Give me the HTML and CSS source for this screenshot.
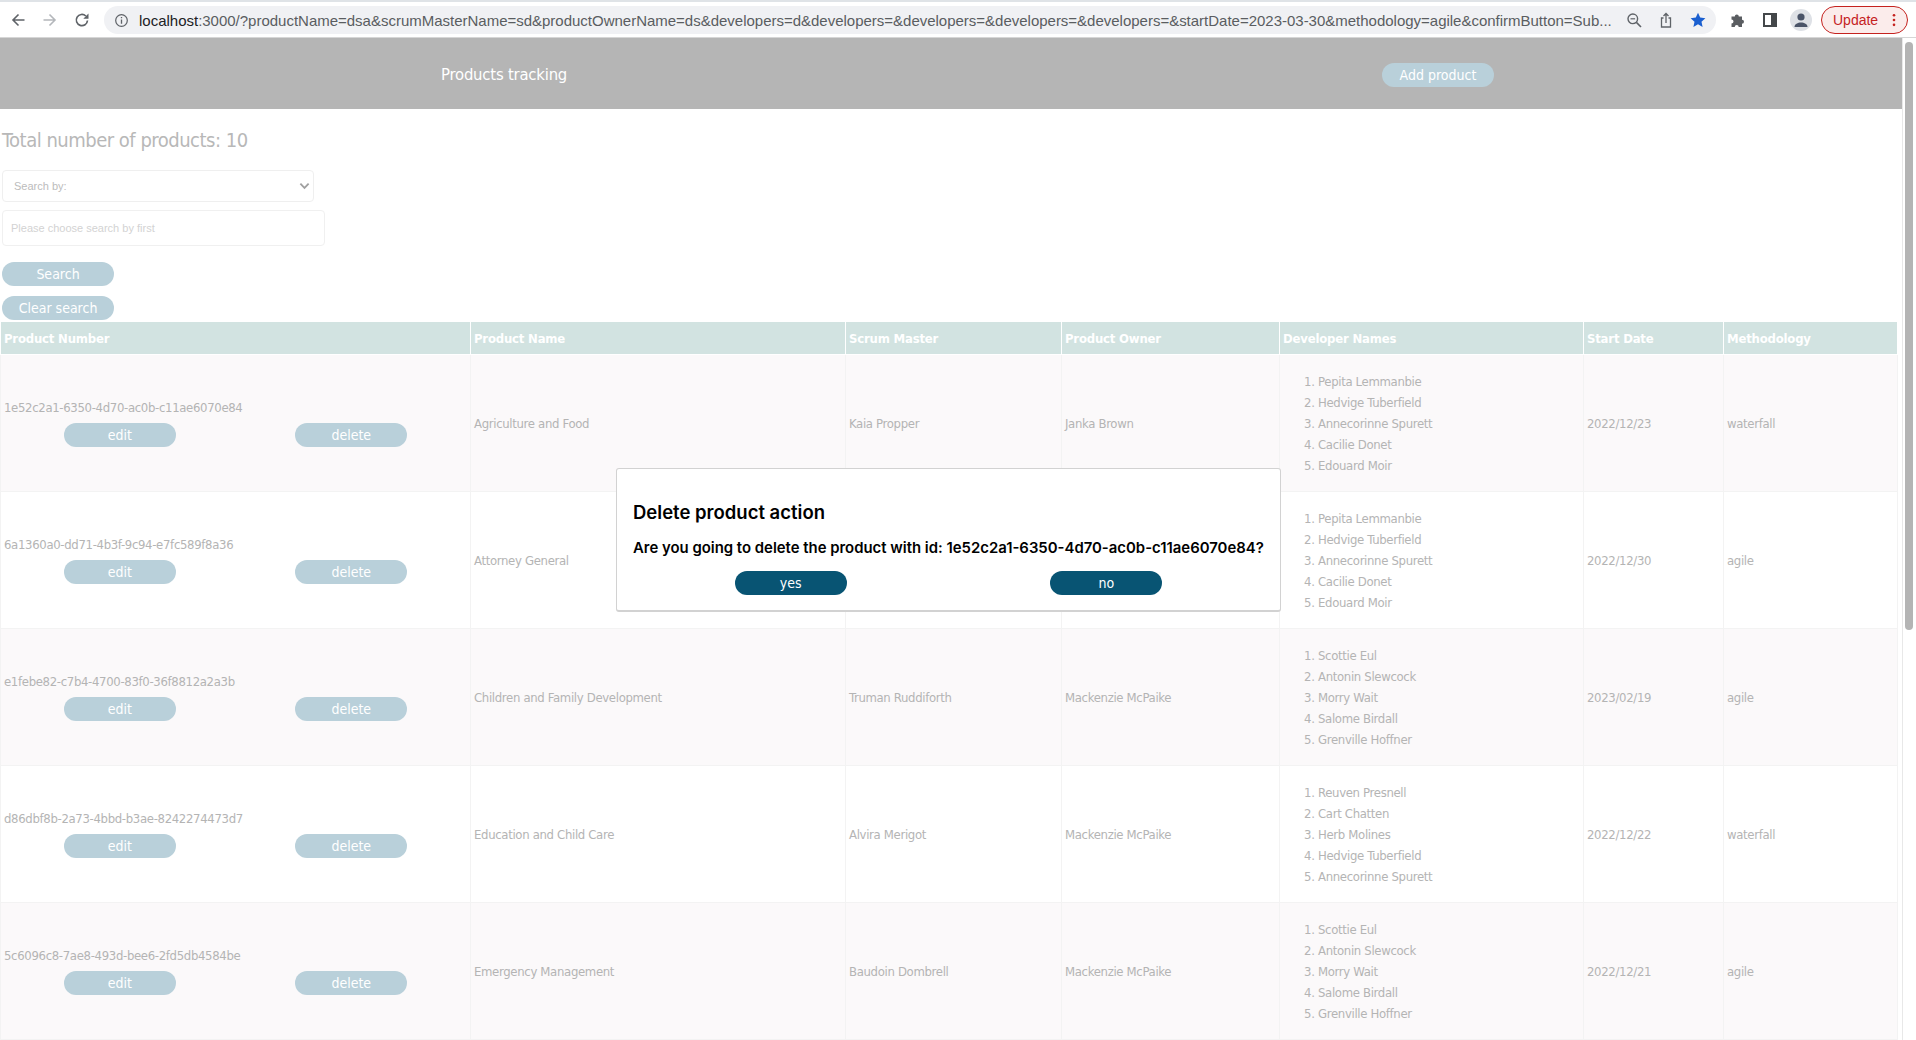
FILE: index.html
```html
<!DOCTYPE html>
<html lang="en">
<head>
<meta charset="utf-8">
<title>Products tracking</title>
<link rel="stylesheet" href="styles.css">
</head>
<body>
<div class="browser-bar">
  <svg class="ic" viewBox="0 0 16 16"><path d="M14.500 8H3M8.500 2.500 3 8l5.500 5.500" fill="none" stroke="#5f6368" stroke-width="1.6"/></svg>
  <svg class="ic" viewBox="0 0 16 16"><path d="M1.500 8H13M7.500 2.500 13 8l-5.500 5.500" fill="none" stroke="#b4b7bb" stroke-width="1.6"/></svg>
  <svg class="ic" viewBox="0 0 16 16"><path d="M13.500 8.500A5.600 5.600 0 1 1 11.800 4" fill="none" stroke="#5f6368" stroke-width="1.7"/><path d="M14.500 1.500v5.200H9.300z" fill="#5f6368"/></svg>
  <div class="omnibox">
    <svg class="info" viewBox="0 0 16 16"><circle cx="8" cy="8" r="6.200" fill="none" stroke="#5f6368" stroke-width="1.300"/><path d="M8 7v4.500M8 4.200v1.500" stroke="#5f6368" stroke-width="1.400"/></svg>
    <div class="url"><b>localhost</b>:3000/?productName=dsa&amp;scrumMasterName=sd&amp;productOwnerName=ds&amp;developers=d&amp;developers=&amp;developers=&amp;developers=&amp;developers=&amp;startDate=2023-03-30&amp;methodology=agile&amp;confirmButton=Sub...</div>
    <svg class="omni-ic" viewBox="0 0 16 16"><circle cx="6.800" cy="6.800" r="4.800" fill="none" stroke="#5f6368" stroke-width="1.400"/><path d="M10.400 10.400 15 15" stroke="#5f6368" stroke-width="1.600"/><path d="M4.500 6.800h4.600" stroke="#5f6368" stroke-width="1.200"/></svg>
    <svg class="omni-ic" viewBox="0 0 16 16"><path d="M5.500 6H3.500v9h9V6h-2M8 11V1.500M5.500 4 8 1.500 10.500 4" fill="none" stroke="#5f6368" stroke-width="1.300"/></svg>
    <svg class="omni-ic" viewBox="0 0 16 16"><path d="m8 .8 2.200 4.800 5.200.6-3.900 3.500 1.100 5.200L8 12.300l-4.600 2.600 1.100-5.200L.6 6.200l5.200-.6z" fill="#1a5fd0"/></svg>
  </div>
  <svg class="ext" viewBox="0 0 16 16"><path d="M1.500 4.500h3.300a2 2 0 1 1 4 0h3.200v3.200a2 2 0 1 1 0 4V15H8.700a2 2 0 1 0-4 0H1.500v-3.500a2 2 0 1 0 0-4z" fill="#5a5d61"/></svg>
  <svg class="ext" viewBox="0 0 16 16"><path d="M2 2h12v12H2z" fill="#fff" stroke="#44474a" stroke-width="2"/><path d="M9 2h5v12H9z" fill="#44474a"/></svg>
  <div class="avatar"><svg viewBox="0 0 22 22"><circle cx="11" cy="8" r="3.600" fill="#4a5468"/><path d="M4.500 18c0-6 13-6 13 0z" fill="#4a5468"/></svg></div>
  <div class="update"><span>Update</span><svg class="dots" viewBox="0 0 4 16"><circle cx="2" cy="2.500" r="1.500"/><circle cx="2" cy="8" r="1.500"/><circle cx="2" cy="13.500" r="1.500"/></svg></div>
</div>

<div class="viewport">
  <div class="page">
    <header class="top">
      <div class="brand">Products tracking</div>
      <button class="pill add">Add product</button>
    </header>
    <h2 class="total">Total number of products: 10</h2>
    <div class="fake-select"><span>Search by:</span><svg viewBox="0 0 12 8"><path d="M1.500 1.500 6 6l4.500-4.500" fill="none" stroke="#a0a0a0" stroke-width="2"/></svg></div>
    <div class="fake-input">Please choose search by first</div>
    <button class="pill search">Search</button>
    <button class="pill clear">Clear search</button>
    <table class="products">
      <colgroup><col class="c1"><col class="c2"><col class="c3"><col class="c4"><col class="c5"><col class="c6"><col class="c7"></colgroup>
      <thead>
        <tr><th>Product Number</th><th>Product Name</th><th>Scrum Master</th><th>Product Owner</th><th>Developer Names</th><th>Start Date</th><th>Methodology</th></tr>
      </thead>
      <tbody>
        <tr>
          <td>1e52c2a1-6350-4d70-ac0b-c11ae6070e84<div class="actions"><button class="pill">edit</button><button class="pill">delete</button></div></td>
          <td>Agriculture and Food</td><td>Kaia Propper</td><td>Janka Brown</td>
          <td><ol><li>Pepita Lemmanbie</li><li>Hedvige Tuberfield</li><li>Annecorinne Spurett</li><li>Cacilie Donet</li><li>Edouard Moir</li></ol></td>
          <td>2022/12/23</td><td>waterfall</td>
        </tr>
        <tr>
          <td>6a1360a0-dd71-4b3f-9c94-e7fc589f8a36<div class="actions"><button class="pill">edit</button><button class="pill">delete</button></div></td>
          <td>Attorney General</td><td></td><td></td>
          <td><ol><li>Pepita Lemmanbie</li><li>Hedvige Tuberfield</li><li>Annecorinne Spurett</li><li>Cacilie Donet</li><li>Edouard Moir</li></ol></td>
          <td>2022/12/30</td><td>agile</td>
        </tr>
        <tr>
          <td>e1febe82-c7b4-4700-83f0-36f8812a2a3b<div class="actions"><button class="pill">edit</button><button class="pill">delete</button></div></td>
          <td>Children and Family Development</td><td>Truman Ruddiforth</td><td>Mackenzie McPaike</td>
          <td><ol><li>Scottie Eul</li><li>Antonin Slewcock</li><li>Morry Wait</li><li>Salome Birdall</li><li>Grenville Hoffner</li></ol></td>
          <td>2023/02/19</td><td>agile</td>
        </tr>
        <tr>
          <td>d86dbf8b-2a73-4bbd-b3ae-8242274473d7<div class="actions"><button class="pill">edit</button><button class="pill">delete</button></div></td>
          <td>Education and Child Care</td><td>Alvira Merigot</td><td>Mackenzie McPaike</td>
          <td><ol><li>Reuven Presnell</li><li>Cart Chatten</li><li>Herb Molines</li><li>Hedvige Tuberfield</li><li>Annecorinne Spurett</li></ol></td>
          <td>2022/12/22</td><td>waterfall</td>
        </tr>
        <tr>
          <td>5c6096c8-7ae8-493d-bee6-2fd5db4584be<div class="actions"><button class="pill">edit</button><button class="pill">delete</button></div></td>
          <td>Emergency Management</td><td>Baudoin Dombrell</td><td>Mackenzie McPaike</td>
          <td><ol><li>Scottie Eul</li><li>Antonin Slewcock</li><li>Morry Wait</li><li>Salome Birdall</li><li>Grenville Hoffner</li></ol></td>
          <td>2022/12/21</td><td>agile</td>
        </tr>
      </tbody>
    </table>
  </div>
  <div class="scrollbar"><div class="thumb"></div></div>
  <div class="modal">
    <h3>Delete product action</h3>
    <p>Are you going to delete the product with id: 1e52c2a1-6350-4d70-ac0b-c11ae6070e84?</p>
    <div class="modal-actions"><button class="pill dark">yes</button><button class="pill dark">no</button></div>
  </div>
</div>
</body>
</html>
```
FILE: styles.css
```css
* { box-sizing: border-box; }
html, body { margin: 0; height: 100%; overflow: hidden; background: #fff; }
body { font-family: "DejaVu Sans Condensed", "DejaVu Sans", sans-serif; display: flex; flex-direction: column; }

.browser-bar { height: 38px; flex: none; display: flex; align-items: center; background: #fff; border-top: 2px solid #dfe3e7; border-bottom: 1px solid #d6d6d6; padding: 4px 0 3px 10px; }
.ic { width: 16px; height: 16px; margin-right: 16px; flex: none; }
.omnibox { width: 1612px; margin-left: -2px; height: 28px; background: #f0f1f4; border-radius: 14px; display: flex; align-items: center; padding-left: 10px; flex: none; }
.info { width: 15px; height: 15px; flex: none; margin-right: 10px; }
.url { width: 1473px; flex: none; font: 15px "Liberation Sans", sans-serif; letter-spacing: -.01px; color: #5a5d61; white-space: nowrap; }
.url b { font-weight: 400; color: #202124; }
.omni-ic { width: 16px; height: 16px; flex: none; margin-left: 16px; }
.omnibox .url + .omni-ic { margin-left: 14px; }
.ext { width: 16px; height: 16px; flex: none; margin-left: 16px; }
.omnibox + .ext { margin-left: 14px; }
.avatar { width: 22px; height: 22px; border-radius: 50%; background: #dee1e6; margin-left: 12px; flex: none; }
.avatar svg { display: block; width: 22px; height: 22px; }
.update { width: 87px; height: 28px; margin-left: 9px; border: 1px solid #c5221f; border-radius: 14px; background: #fbeceb; color: #c5221f; display: flex; align-items: center; justify-content: space-between; padding: 0 11px 0 11px; font: 14px "Liberation Sans", sans-serif; flex: none; }
.dots { width: 4px; height: 14px; fill: #c5221f; }

.viewport { position: relative; flex: 1; min-height: 0; display: flex; overflow: hidden; }
.page { flex: 1; min-width: 0; }
.scrollbar { width: 14px; flex: none; background: #fff; border-left: 1px solid #e8e8e8; padding: 4px 3px 0 2px; }
.thumb { height: 588px; background: #b4b4b4; border-radius: 4px; }

.top { height: 71px; background: #b5b5b5; display: flex; align-items: center; padding: 2px 0 0 441px; }
.brand { color: #fff; font-size: 16.500px; letter-spacing: -.2px; width: 941px; }
.pill { display: block; width: 112px; height: 24px; border: 0; border-radius: 12px; padding: 0; background: #b9d0da; color: #fff; font-family: inherit; font-size: 14px; line-height: 24px; text-align: center; }
.total { margin: 0; padding: 21px 0 0 2px; font-size: 20px; font-weight: 400; letter-spacing: -.5px; line-height: 20px; height: 61px; color: #b8b8b8; }
.fake-select { width: 312px; height: 32px; margin-left: 2px; border: 1px solid #efefef; border-radius: 4px; display: flex; align-items: center; justify-content: space-between; padding: 0 3px 0 11px; font: 11px "Liberation Sans", sans-serif; color: #bcbcbc; }
.fake-select svg { width: 11px; height: 8px; }
.fake-input { width: 323px; height: 36px; margin: 8px 0 16px 2px; border: 1px solid #f0f0f0; border-radius: 4px; padding: 0 8px; font: 11px/34px "Liberation Sans", sans-serif; color: #d3d3d3; }
.pill.search { margin-left: 2px; }
.pill.clear { margin: 10px 0 1px 2px; }

.products { width: 1897px; table-layout: fixed; border-collapse: collapse; color: #b4b4b4; font-size: 13px; letter-spacing: -.33px; }
.c1 { width: 470px; } .c2 { width: 375px; } .c3 { width: 216px; } .c4 { width: 218px; } .c5 { width: 304px; } .c6 { width: 140px; } .c7 { width: 174px; }
.products th { height: 33px; background: #d2e3e1; color: #fff; font-weight: 700; text-align: left; padding: 0 3px; border: 1px solid #fff; font-size: 13px; letter-spacing: -.2px; }
.products td { height: 137px; padding: 0 3px; border: 1px solid #f3f3f3; vertical-align: middle; }
.products tbody tr:nth-child(odd) td { background: #fbf9fa; }
.actions { display: flex; justify-content: space-around; margin-top: 8px; letter-spacing: 0; }
ol { margin: 0; padding-left: 35px; }
li { line-height: 21px; }

.modal { position: absolute; left: 616px; top: 430px; width: 665px; height: 144px; background: #fff; border: 1px solid #d2d2d2; border-bottom-width: 2px; border-radius: 3px; padding: 32px 16px 0; font-family: Inter, sans-serif; color: #000; z-index: 5; }
.modal h3 { margin: 0; font-size: 18.500px; line-height: 22px; font-weight: 600; }
.modal p { margin: 15px 0 0; font-size: 14.900px; line-height: 20px; font-weight: 600; white-space: nowrap; }
.modal-actions { display: flex; justify-content: space-around; margin-top: 13px; }
.pill.dark { background: #085473; font-family: "DejaVu Sans Condensed", sans-serif; }
```
